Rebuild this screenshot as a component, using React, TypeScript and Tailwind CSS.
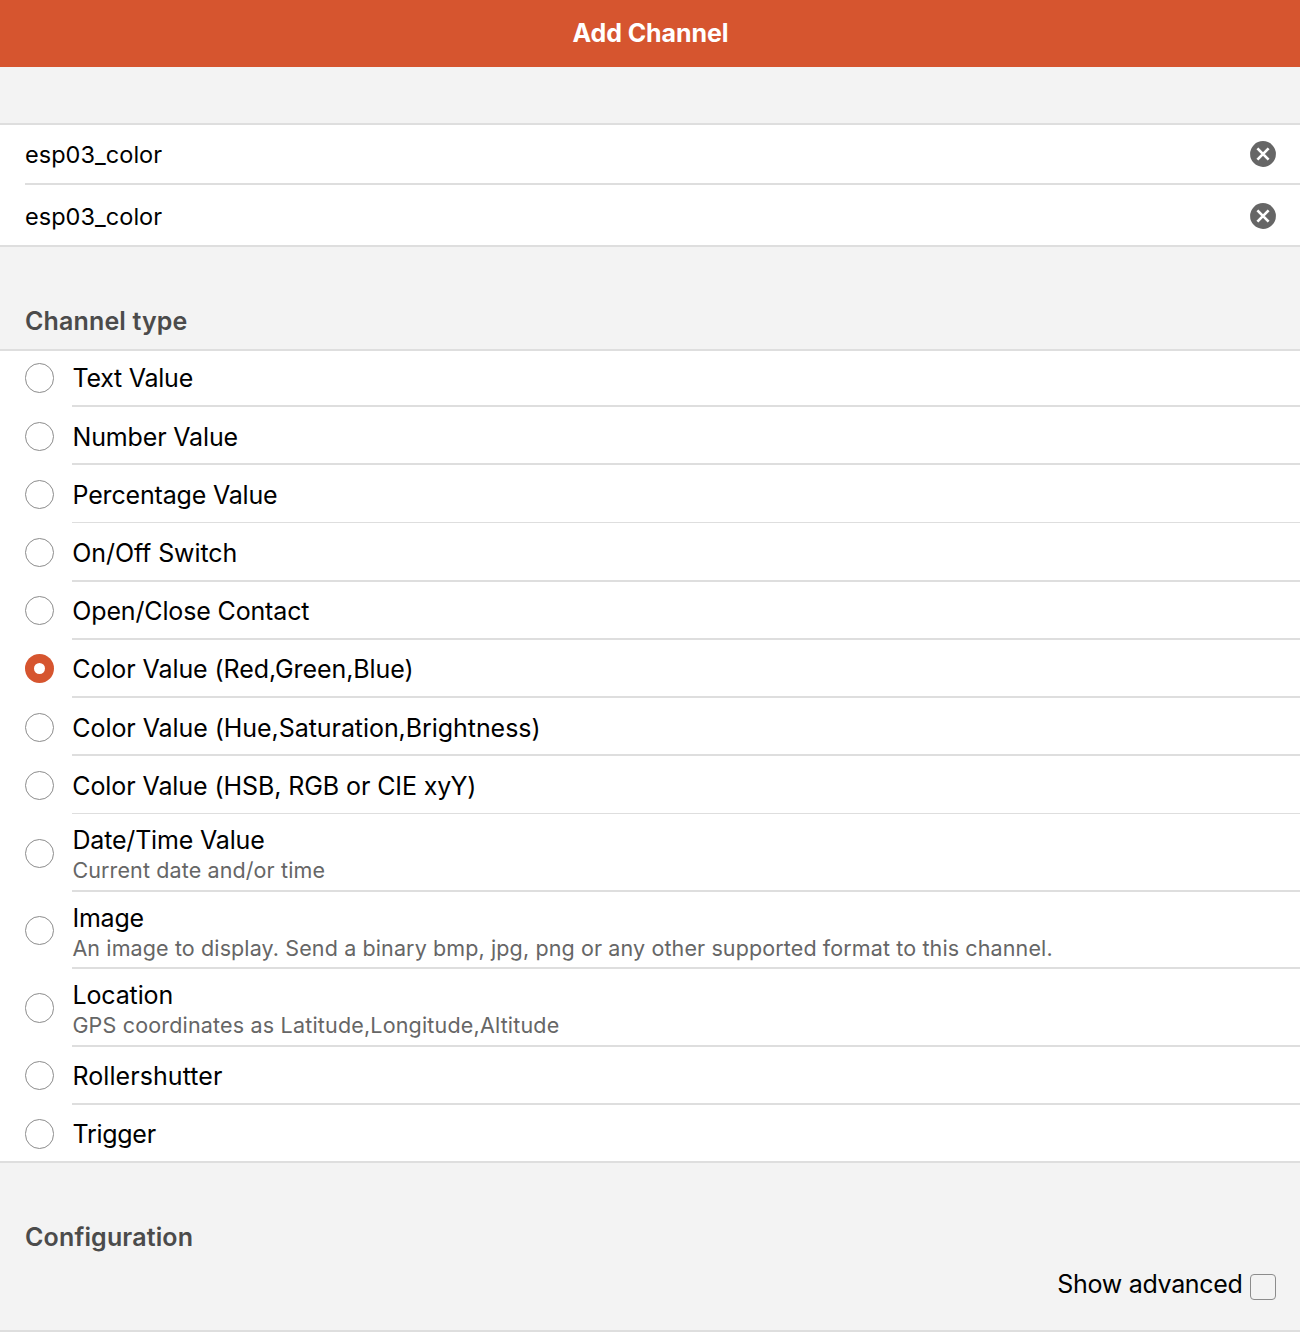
type Option = {
  label: string;
  note?: string;
  checked?: boolean;
  row: string;
  radio: string;
  text: string;
  tracking: string;
  noteTracking?: string;
};

const options: Option[] = [
  { label: 'Text Value', row: 'h-14 border-b-2', radio: 'mt-3 h-[30px]', text: 'pt-3 pl-[0.5px]', tracking: 'tracking-[-0.25px]' },
  { label: 'Number Value', row: 'h-[58px] border-b-2', radio: 'mt-[15px] h-[29px]', text: 'pt-[15px] pl-[0.5px]', tracking: 'tracking-[-0.15px]' },
  { label: 'Percentage Value', row: 'h-[58px] border-b', radio: 'mt-[15px] h-[29px]', text: 'pt-[15px] pl-[0.5px]', tracking: 'tracking-[-0.17px]' },
  { label: 'On/Off Switch', row: 'h-[59px] border-b-2', radio: 'mt-[15px] h-[29px]', text: 'pt-[15px] pl-[0.3px]', tracking: 'tracking-[-0.1px]' },
  { label: 'Open/Close Contact', row: 'h-[58px] border-b-2', radio: 'mt-3.5 h-[29px]', text: 'pt-3.5 pl-[0.3px]', tracking: 'tracking-[-0.15px]' },
  { label: 'Color Value (Red,Green,Blue)', checked: true, row: 'h-[58px] border-b-2', radio: 'mt-3.5 h-[29px]', text: 'pt-3.5 pl-[0.3px]', tracking: 'tracking-[-0.08px]' },
  { label: 'Color Value (Hue,Saturation,Brightness)', row: 'h-[58px] border-b-2', radio: 'mt-[15px] h-[29px]', text: 'pt-[15px] pl-[0.3px]', tracking: 'tracking-[-0.06px]' },
  { label: 'Color Value (HSB, RGB or CIE xyY)', row: 'h-[58px] border-b', radio: 'mt-[15px] h-[29px]', text: 'pt-[15px] pl-[0.3px]', tracking: 'tracking-[-0.09px]' },
  { label: 'Date/Time Value', note: 'Current date and/or time', row: 'h-[78px] border-b-2', radio: 'mt-[25px] h-[29px]', text: 'pt-[11px] pl-[0.4px]', tracking: 'tracking-[-0.17px]', noteTracking: 'tracking-[0.116px]' },
  { label: 'Image', note: 'An image to display. Send a binary bmp, jpg, png or any other supported format to this channel.', row: 'h-[77px] border-b-2', radio: 'mt-6 h-[29px]', text: 'pt-[11px] pl-[0.4px]', tracking: 'tracking-[-0.2px]', noteTracking: 'tracking-[0.117px]' },
  { label: 'Location', note: 'GPS coordinates as Latitude,Longitude,Altitude', row: 'h-[78px] border-b-2', radio: 'mt-6 h-[30px]', text: 'pt-[11px] pl-[0.4px]', tracking: 'tracking-[-0.12px]', noteTracking: 'tracking-[0.18px]' },
  { label: 'Rollershutter', row: 'h-[58px] border-b-2', radio: 'mt-3.5 h-[29px]', text: 'pt-3.5 pl-[0.4px]', tracking: 'tracking-[0.08px]' },
  { label: 'Trigger', row: 'h-14', radio: 'mt-3.5 h-[30px]', text: 'pt-3.5 pl-[0.5px]', tracking: 'tracking-[-0.28px]' },
];

function ClearIcon() {
  return (
    <svg className="size-[26px]" viewBox="0 0 26 26" fill="none">
      <circle cx="13" cy="13" r="12.9" fill="#666666" />
      <path d="M7.4 7.4 18.6 18.6M18.6 7.4 7.4 18.6" stroke="#ffffff" strokeWidth="2.7" />
    </svg>
  );
}

function Radio({ checked, className }: { checked?: boolean; className: string }) {
  return checked ? (
    <span className={`flex w-[29px] shrink-0 items-center justify-center rounded-full bg-[#d6552f] ${className}`}>
      <span className="size-[11px] rounded-full bg-white" />
    </span>
  ) : (
    <span className={`w-[29px] shrink-0 rounded-full border border-[#8c8c8c] ${className}`} />
  );
}

export default function App() {
  return (
    <div className="flex h-[1336px] w-[1300px] flex-col overflow-hidden bg-white font-['Inter','Liberation_Sans',sans-serif] text-[25px] leading-[30px] text-black">
      <header className="h-[67px] shrink-0 bg-[#d6552f] pt-[18px] pl-px text-center font-bold tracking-[-0.1px] text-white">
        Add Channel
      </header>

      <div className="h-14 shrink-0 bg-[#f3f3f3]" />

      <section className="shrink-0 border-y-2 border-[#dedede] pl-[25px] text-[23.5px] tracking-[0.04px]">
        <div className="flex h-[60px] justify-between border-b-2 border-[#dedede] pr-6">
          <span className="pt-[15px]">esp03_color</span>
          <span className="pt-4"><ClearIcon /></span>
        </div>
        <div className="flex h-[60px] justify-between pr-6">
          <span className="pt-[17px]">esp03_color</span>
          <span className="pt-[18px]"><ClearIcon /></span>
        </div>
      </section>

      <h2 className="h-[102px] shrink-0 bg-[#f3f3f3] pt-[59px] pl-[25px] font-semibold tracking-[0.15px] text-[#4b4b4b]">
        Channel type
      </h2>

      <ul className="shrink-0 border-y-2 border-[#dedede]">
        {options.map((o) => (
          <li key={o.label} className="flex pl-[25px]">
            <Radio checked={o.checked} className={o.radio} />
            <div className={`ml-[18px] flex-1 border-[#dedede] ${o.row} ${o.text}`}>
              <div className={`whitespace-nowrap ${o.tracking}`}>{o.label}</div>
              {o.note && (
                <div className={`text-[21.5px] whitespace-nowrap text-[#666666] ${o.noteTracking}`}>{o.note}</div>
              )}
            </div>
          </li>
        ))}
      </ul>

      <section className="h-[169px] shrink-0 border-b-2 border-[#dedede] bg-[#f3f3f3]">
        <h2 className="pt-[59px] pl-[25px] font-semibold tracking-[0.15px] text-[#4b4b4b]">Configuration</h2>
        <label className="mt-[17px] flex justify-end pr-6">
          <span className="mr-[7.4px] tracking-[-0.301px]">Show advanced</span>
          <span className="mt-[5px] size-[26px] rounded-[4px] border border-[#8c8c8c]" />
        </label>
      </section>
    </div>
  );
}
